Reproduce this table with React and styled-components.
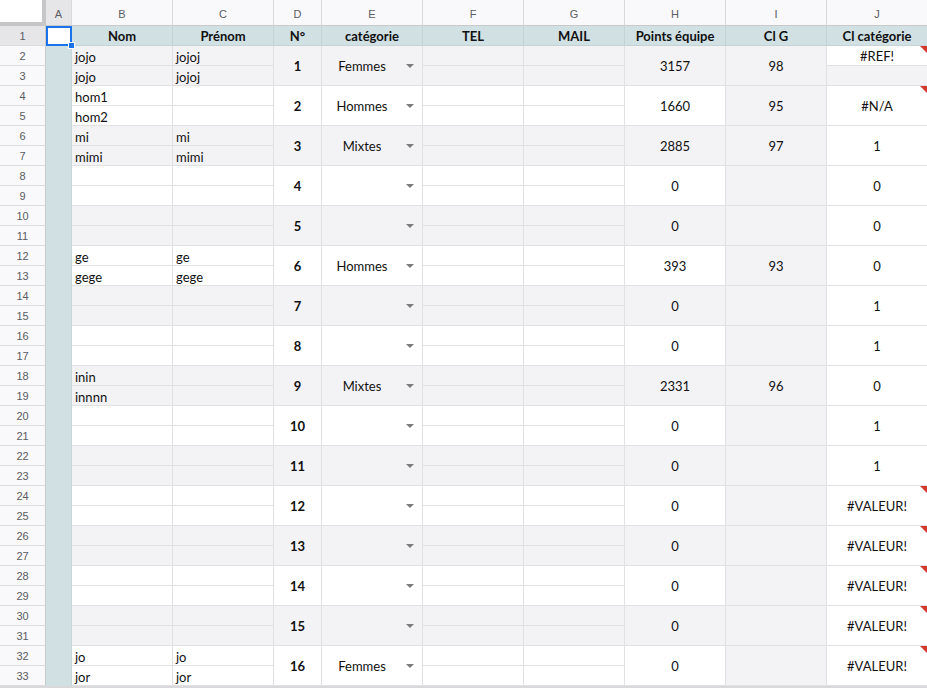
import React from "react";
import styled, { createGlobalStyle } from "styled-components";

const GlobalStyle = createGlobalStyle`
  html, body {
    margin: 0;
    padding: 0;
    background: #d9d9dc;
    overflow: hidden;
  }
  * { box-sizing: border-box; }
`;

const GREY = "#f3f2f5";
const WHITE = "#ffffff";
const TEAL = "#d0e0e3";
const LINE = "#e1e0e3";

const Sheet = styled.div`
  display: grid;
  grid-template-columns: 46px 26px 101px 101px 48px repeat(6, 101px);
  grid-template-rows: 26px repeat(33, 20px);
  width: 928px;
  font-family: Lato, "Open Sans", sans-serif;
  font-size: 13px;
  color: #111;
  background: ${WHITE};
`;

const Corner = styled.div`
  grid-row: 1;
  grid-column: 1;
  background: #fff;
  border-right: 4px solid #c6c6c9;
  border-bottom: 4px solid #c6c6c9;
`;

const ColHead = styled.div`
  grid-row: 1;
  grid-column: ${(p) => p.$col};
  display: flex;
  align-items: center;
  justify-content: center;
  background: ${(p) => (p.$active ? "#e6e6e9" : "#f9f8fb")};
  border-right: 1px solid #d9d9dc;
  border-bottom: 1px solid #c9c9cc;
  font-family: "Liberation Sans", Arial, sans-serif;
  font-size: 11px;
  color: #5a5d61;
  padding-top: 2px;
`;

const RowHead = styled.div`
  grid-row: ${(p) => p.$row};
  grid-column: 1;
  display: flex;
  align-items: center;
  justify-content: center;
  background: ${(p) => (p.$active ? "#e6e6e9" : "#f9f8fb")};
  border-right: 1px solid #c9c9cc;
  border-bottom: 1px solid #dcdcdf;
  font-family: "Liberation Sans", Arial, sans-serif;
  font-size: 11px;
  color: #5a5d61;
`;

const Cell = styled.div`
  grid-row: ${(p) => p.$row} / span ${(p) => p.$span || 1};
  grid-column: ${(p) => p.$col};
  position: relative;
  display: flex;
  align-items: ${(p) => (p.$span > 1 ? "center" : "flex-end")};
  justify-content: ${(p) => (p.$left ? "flex-start" : "center")};
  padding: ${(p) => (p.$span > 1 ? "1px 3px 0" : "0 3px 0")};
  background: ${(p) => p.$bg};
  border-right: 1px solid ${LINE};
  border-bottom: 1px solid ${LINE};
  font-weight: ${(p) => (p.$bold ? 700 : 400)};
  white-space: nowrap;
  overflow: hidden;
  line-height: 16px;
`;

const HeadCell = styled(Cell)`
  align-items: center;
  background: ${TEAL};
  border-color: #c5d3d6;
  font-weight: 700;
  padding: 1px 3px 0;
`;

const ColumnFill = styled.div`
  grid-row: 3 / span 32;
  grid-column: 2;
  background: ${TEAL};
  border-right: 1px solid #c8d6d9;
`;

const Selected = styled.div`
  grid-row: 2;
  grid-column: 2;
  position: relative;
  background: #fff;
  border: 2px solid #1a73e8;
  z-index: 2;
`;

const Handle = styled.span`
  position: absolute;
  right: -5px;
  bottom: -5px;
  width: 7px;
  height: 7px;
  background: #1a73e8;
  border: 1px solid #fff;
`;

const Select = styled(Cell)`
  justify-content: space-between;
  padding: 1px 8px 0 0;
`;

const Label = styled.span`
  flex: 1;
  text-align: center;
`;

const Arrow = styled.span`
  width: 0;
  height: 0;
  border-left: 4px solid transparent;
  border-right: 4px solid transparent;
  border-top: 4px solid #7b7b7e;
  margin-left: 4px;
`;

const Note = styled.span`
  position: absolute;
  top: 0;
  right: 0;
  width: 0;
  height: 0;
  border-top: 7px solid #d2382b;
  border-left: 7px solid transparent;
`;

const teams = [
  { b: ["jojo", "jojo"], c: ["jojoj", "jojoj"], cat: "Femmes", pts: "3157", clg: "98", clc: "#REF!", split: true, note: true },
  { b: ["hom1", "hom2"], c: ["", ""], cat: "Hommes", pts: "1660", clg: "95", clc: "#N/A", note: true },
  { b: ["mi", "mimi"], c: ["mi", "mimi"], cat: "Mixtes", pts: "2885", clg: "97", clc: "1" },
  { pts: "0", clc: "0" },
  { pts: "0", clc: "0" },
  { b: ["ge", "gege"], c: ["ge", "gege"], cat: "Hommes", pts: "393", clg: "93", clc: "0" },
  { pts: "0", clc: "1" },
  { pts: "0", clc: "1" },
  { b: ["inin", "innnn"], c: ["", ""], cat: "Mixtes", pts: "2331", clg: "96", clc: "0" },
  { pts: "0", clc: "1" },
  { pts: "0", clc: "1" },
  { pts: "0", clc: "#VALEUR!", note: true },
  { pts: "0", clc: "#VALEUR!", note: true },
  { pts: "0", clc: "#VALEUR!", note: true },
  { pts: "0", clc: "#VALEUR!", note: true },
  { b: ["jo", "jor"], c: ["jo", "jor"], cat: "Femmes", pts: "0", clc: "#VALEUR!", note: true },
];

const letters = ["A", "B", "C", "D", "E", "F", "G", "H", "I", "J"];
const headers = ["Nom", "Prénom", "N°", "catégorie", "TEL", "MAIL", "Points équipe", "Cl G", "Cl catégorie"];

const TeamRows = ({ team, index }) => {
  const row = 3 + index * 2;
  const bg = index % 2 === 0 ? GREY : WHITE;
  const b = team.b || ["", ""];
  const c = team.c || ["", ""];
  return (
    <>
      <RowHead $row={row}>{row - 1}</RowHead>
      <RowHead $row={row + 1}>{row}</RowHead>
      {[0, 1].map((k) => (
        <React.Fragment key={k}>
          <Cell $row={row + k} $col={3} $bg={bg} $left>{b[k]}</Cell>
          <Cell $row={row + k} $col={4} $bg={bg} $left>{c[k]}</Cell>
          <Cell $row={row + k} $col={7} $bg={bg} />
          <Cell $row={row + k} $col={8} $bg={bg} />
        </React.Fragment>
      ))}
      <Cell $row={row} $span={2} $col={5} $bg={bg} $bold>{index + 1}</Cell>
      <Select $row={row} $span={2} $col={6} $bg={bg}>
        <Label>{team.cat || ""}</Label>
        <Arrow />
      </Select>
      <Cell $row={row} $span={2} $col={9} $bg={bg}>{team.pts}</Cell>
      <Cell $row={row} $span={2} $col={10} $bg={GREY}>{team.clg || ""}</Cell>
      {team.split ? (
        <>
          <Cell $row={row} $span={1} $col={11} $bg={WHITE} style={{ alignItems: "center" }}>
            {team.clc}
            {team.note && <Note />}
          </Cell>
          <Cell $row={row + 1} $col={11} $bg={GREY} />
        </>
      ) : (
        <Cell $row={row} $span={2} $col={11} $bg={WHITE}>
          {team.clc}
          {team.note && <Note />}
        </Cell>
      )}
    </>
  );
};

const App = () => (
  <>
    <GlobalStyle />
    <Sheet>
      <Corner />
      {letters.map((l, i) => (
        <ColHead key={l} $col={i + 2} $active={l === "A"}>{l}</ColHead>
      ))}
      <RowHead $row={2} $active>1</RowHead>
      <Selected>
        <Handle />
      </Selected>
      {headers.map((h, i) => (
        <HeadCell key={h} $row={2} $col={i + 3}>{h}</HeadCell>
      ))}
      <ColumnFill />
      {teams.map((t, i) => (
        <TeamRows key={i} team={t} index={i} />
      ))}
    </Sheet>
  </>
);

export default App;
